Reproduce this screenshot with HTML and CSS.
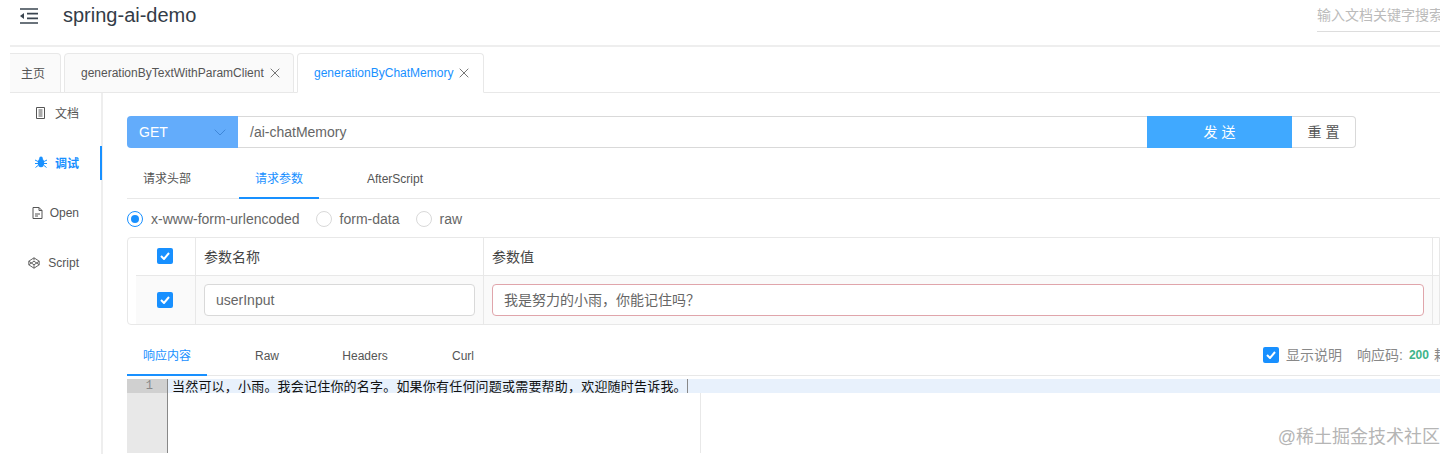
FILE: index.html
```html
<!DOCTYPE html>
<html lang="zh">
<head>
<meta charset="utf-8">
<title>spring-ai-demo</title>
<link rel="stylesheet" href="styles.css">
</head>
<body>
<div class="app">
  <header class="topbar">
    <svg class="menu-icon" width="18" height="16" viewBox="0 0 18 16"><path d="M0 1h18M7 5.700h11M7 10.300h11M0 15h18" stroke="#3a4550" stroke-width="1.700" fill="none"/><path d="M0 8l4-3v6z" fill="#3a4550"/></svg>
    <h1 class="title">spring-ai-demo</h1>
    <div class="search">输入文档关键字搜索</div>
  </header>
  <nav class="tabs">
    <div class="tab tab-home">主页</div>
    <div class="tab tab-wide">generationByTextWithParamClient<svg class="close" width="10" height="10" viewBox="0 0 10 10"><path d="M.7.7l8.6 8.6M9.3.7L.7 9.3" stroke="#777" stroke-width="1" fill="none"/></svg></div>
    <div class="tab tab-active">generationByChatMemory<svg class="close" width="10" height="10" viewBox="0 0 10 10"><path d="M.7.7l8.6 8.6M9.3.7L.7 9.3" stroke="#777" stroke-width="1" fill="none"/></svg></div>
  </nav>
  <div class="body">
    <aside class="side">
      <div class="side-item item-doc"><svg width="11" height="12" viewBox="0 0 11 12"><path d="M1.500.5h8v11h-8zM3.500 3h4M3.500 5h4M3.500 7h4M3.500 9h4" stroke="#555" fill="none"/></svg><span>文档</span></div>
      <div class="side-item item-debug active"><svg width="12" height="12" viewBox="0 0 12 12"><ellipse cx="6" cy="7" rx="3.200" ry="4.200" fill="#1890ff"/><circle cx="6" cy="2.400" r="1.800" fill="#1890ff"/><path d="M0 4l3 1.500M12 4L9 5.500M0 7.500h3M12 7.500H9M.5 11.500L3 9.500M11.500 11.500L9 9.500" stroke="#1890ff" fill="none"/></svg><span>调试</span></div>
      <div class="side-item item-open"><svg width="11" height="12" viewBox="0 0 11 12"><path d="M1 .5h6l3 3v8H1zM7 .5v3h3M3 7h5M3 9h3" stroke="#555" fill="none"/></svg><span>Open</span></div>
      <div class="side-item item-script"><svg width="12" height="12" viewBox="0 0 12 12"><path d="M6 .8l5.200 3.400v3.600L6 11.200.8 7.800V4.200zM.8 4.200L6 7.800l5.200-3.600M6 .8v2.600M.8 7.800L6 4.200l5.200 3.600M6 11.200V7.800" stroke="#555" stroke-width=".9" fill="none"/></svg><span>Script</span></div>
    </aside>
    <main class="main">
      <div class="urlbar">
        <div class="method"><span>GET</span><svg width="12" height="7" viewBox="0 0 12 7"><path d="M.7.7L6 6l5.300-5.300" stroke="#3f87d8" fill="none"/></svg></div>
        <div class="url">/ai-chatMemory</div>
        <div class="send">发 送</div>
        <div class="reset">重 置</div>
      </div>
      <div class="subtabs req-tabs">
        <div class="subtab">请求头部</div>
        <div class="subtab on">请求参数</div>
        <div class="subtab">AfterScript</div>
      </div>
      <div class="radios">
        <label class="radio"><i class="dot checked"></i>x-www-form-urlencoded</label>
        <label class="radio"><i class="dot"></i>form-data</label>
        <label class="radio"><i class="dot"></i>raw</label>
      </div>
      <div class="table">
        <div class="row head">
          <div class="c c-check"><i class="check"><svg width="10" height="8" viewBox="0 0 10 8"><path d="M1 4l3 3 5-6" stroke="#fff" stroke-width="2" fill="none"/></svg></i></div>
          <div class="c c-name">参数名称</div>
          <div class="c c-value">参数值</div>
          <div class="c c-end"></div>
        </div>
        <div class="row data">
          <div class="c c-check"><i class="check"><svg width="10" height="8" viewBox="0 0 10 8"><path d="M1 4l3 3 5-6" stroke="#fff" stroke-width="2" fill="none"/></svg></i></div>
          <div class="c c-name"><div class="field">userInput</div></div>
          <div class="c c-value"><div class="field field-err">我是努力的小雨，你能记住吗？</div></div>
          <div class="c c-end"></div>
        </div>
      </div>
      <div class="subtabs res-tabs">
        <div class="subtab on">响应内容</div>
        <div class="subtab">Raw</div>
        <div class="subtab">Headers</div>
        <div class="subtab">Curl</div>
        <div class="res-info">
          <i class="check"><svg width="10" height="8" viewBox="0 0 10 8"><path d="M1 4l3 3 5-6" stroke="#fff" stroke-width="2" fill="none"/></svg></i>
          <span class="explain">显示说明</span>
          <span class="code-label">响应码:</span><b class="code">200</b><span class="code-label">耗时</span>
        </div>
      </div>
      <div class="editor">
        <div class="gutter"><div class="line-no">1</div></div>
        <div class="lines">
          <div class="line">当然可以，小雨。我会记住你的名字。如果你有任何问题或需要帮助，欢迎随时告诉我。<i class="cursor"></i></div>
          <div class="margin"></div>
        </div>
      </div>
    </main>
  </div>
  <div class="watermark">@稀土掘金技术社区</div>
</div>
</body>
</html>
```
FILE: styles.css
```css
* { box-sizing: border-box; }
html, body { margin: 0; padding: 0; background: #fff; }
body { font-family: "Liberation Sans", "Noto Sans CJK SC", sans-serif; color: #555; overflow: hidden; }
i { font-style: normal; display: block; }
.app { position: relative; width: 1440px; height: 454px; padding-left: 10px; overflow: hidden; }

.topbar { height: 47px; display: flex; align-items: flex-start; border-bottom: 2px solid #eee; position: relative; }
.menu-icon { margin: 8px 0 0 10px; flex: none; }
.title { margin: 3px 0 0 25px; font-size: 20px; line-height: 24px; font-weight: 400; color: #333c47; }
.search { margin-left: auto; width: 123px; height: 32px; border-bottom: 1px solid #ddd; font-size: 14px; line-height: 30px; color: #bbb; white-space: nowrap; overflow: hidden; }

.tabs { height: 46px; display: flex; align-items: flex-end; gap: 3px; border-bottom: 1px solid #e8e8e8; padding-top: 6px; }
.tab { height: 40px; display: flex; align-items: center; border: 1px solid #e8e8e8; border-radius: 4px 4px 0 0; background: #fafafa; font-size: 12px; color: #555; white-space: nowrap; margin-bottom: -1px; }
.tab-home { width: 51px; padding: 0 0 2px 11px; border-left: 0; border-radius: 0 4px 0 0; }
.tab-wide { width: 230px; padding-left: 16px; }
.tab-active { width: 187px; padding-left: 16px; background: #fff; color: #1890ff; border-bottom-color: #fff; }
.close { margin-left: 6px; }

.body { display: flex; height: 361px; }
.side { width: 93px; flex: none; border-right: 2px solid #eee; }
.side-item { display: flex; align-items: center; justify-content: flex-end; gap: 8px; font-size: 12px; color: #555; padding-right: 22px; margin-right: -2px; border-right: 2px solid transparent; }
.side-item svg { flex: none; }
.side-item span { white-space: nowrap; }
.item-doc { height: 39px; gap: 9px; }
.item-debug { height: 60px; padding-right: 24px; }
.side-item.active { color: #1890ff; font-weight: 700; position: relative; border-right: 0; }
.side-item.active::after { content: ""; position: absolute; right: 1px; top: 14px; width: 2px; height: 34px; background: #1890ff; }
.item-open { height: 42px; }
.item-open svg { margin-right: -1px; }
.item-script { height: 58px; }

.main { width: 1338px; padding: 23px 0 0 24px; flex: none; }
.urlbar { display: flex; width: 1229px; height: 32px; font-size: 14px; }
.method { width: 111px; display: flex; align-items: center; justify-content: space-between; padding: 0 12px; background: #63acfb; color: #fff; border-radius: 4px 0 0 4px; }
.url { flex: 1; border: 1px solid #d9d9d9; border-left: 0; border-right: 0; line-height: 30px; padding-left: 12px; color: #666; }
.send { width: 145px; background: #40a9ff; color: #fff; text-align: center; line-height: 32px; }
.reset { width: 64px; border: 1px solid #d9d9d9; border-left: 0; border-radius: 0 4px 4px 0; text-align: center; line-height: 30px; color: #555; }

.subtabs { display: flex; border-bottom: 1px solid #e8e8e8; font-size: 12px; width: 1313px; }
.subtab { width: 80px; text-align: center; color: #555; white-space: nowrap; border-bottom: 2px solid transparent; margin-bottom: -1px; }
.subtab.on { color: #1890ff; border-bottom-color: #1890ff; }
.req-tabs { height: 37px; margin-top: 14px; gap: 32px; line-height: 35px; }
.req-tabs .subtab { height: 37px; }
.req-tabs .subtab:last-child { width: 56px; margin-left: 16px; }

.radios { display: flex; height: 38px; align-items: center; font-size: 14px; color: #666; padding-top: 2px; }
.radio { display: flex; align-items: center; gap: 8px; margin-right: 16px; }
.dot { width: 16px; height: 16px; border: 1px solid #d9d9d9; border-radius: 50%; position: relative; }
.dot.checked { border-color: #1890ff; }
.dot.checked::after { content: ""; position: absolute; left: 3px; top: 3px; width: 8px; height: 8px; border-radius: 50%; background: #1890ff; }

.table { width: 1313px; height: 88px; border: 1px solid #e8e8e8; border-radius: 4px 0 0 4px; padding-left: 8px; }
.row { display: flex; }
.head { height: 38px; border-bottom: 1px solid #e8e8e8; }
.head .c { padding-bottom: 2px; }
.data { height: 48px; background: #fafafa; }
.c { display: flex; align-items: center; border-right: 1px solid #e8e8e8; font-size: 14px; color: #444; flex: none; }
.c-check { width: 60px; justify-content: center; padding-right: 2px; }
.c-name { width: 288px; padding: 0 8px; }
.c-value { width: 949px; padding: 0 8px; }
.c-end { width: 8px; border-right: 0; }
.check { width: 16px; height: 16px; border-radius: 2px; background: #1890ff; display: flex; align-items: center; justify-content: center; flex: none; }
.field { width: 100%; height: 32px; border: 1px solid #d9d9d9; border-radius: 4px; background: #fff; font-size: 14px; line-height: 30px; padding-left: 11px; color: #666; }
.field-err { border-color: #e0a5ab; }

.res-tabs { height: 36px; margin-top: 15px; align-items: stretch; line-height: 32px; }
.res-tabs .subtab { height: 36px; }
.res-tabs .subtab:nth-child(2) { margin-left: 20px; }
.res-tabs .subtab:nth-child(3) { width: 76px; margin-left: 20px; }
.res-tabs .subtab:nth-child(4) { margin-left: 20px; }
.res-info { margin-left: auto; display: flex; align-items: center; height: 30px; width: 177px; white-space: nowrap; overflow: hidden; font-size: 14px; }
.explain { margin-left: 7px; color: #888; width: 71px; flex: none; }
.code-label { color: #888; flex: none; }
.code { color: #3eb489; margin: 0 5px 0 6px; font-size: 12px; font-weight: 700; flex: none; }

.editor { display: flex; height: 74px; margin-top: 3px; width: 1313px; font-family: "Noto Sans CJK TC", sans-serif; font-size: 13px; }
.gutter { width: 41px; background: #e8e8e8; border-right: 1px solid #888; flex: none; }
.line-no { height: 14px; background: #d0d0d0; text-align: right; padding-right: 14px; line-height: 14px; font-size: 12px; color: #888; font-family: "Liberation Mono", monospace; }
.lines { flex: 1; position: relative; }
.line { height: 14px; line-height: 14px; background: #e8f1fc; padding-left: 4px; color: #111; letter-spacing: .2px; white-space: nowrap; position: relative; }
.cursor { position: absolute; left: 519px; top: 0; width: 1px; height: 14px; background: #888; }
.margin { position: absolute; left: 532px; top: 14px; bottom: 0; width: 1px; background: #e8e8e8; }

.watermark { position: absolute; right: 0; top: 426px; font-size: 18px; line-height: 22px; color: #b5b5b5; white-space: nowrap; }
```
